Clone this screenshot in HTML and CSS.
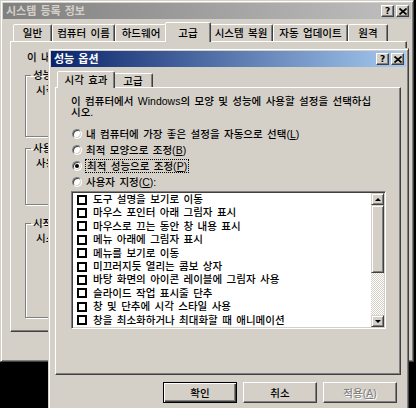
FILE: index.html
```html
<!DOCTYPE html>
<html lang="ko">
<head>
  <meta charset="UTF-8" />
  <title>성능 옵션</title>
  <link rel="stylesheet" href="styles.css">
</head>
<body>
  <div class="desktop">

    <!-- back window -->
    <div class="window sysprops">
      <div class="titlebar inactive">
        <span class="title">시스템 등록 정보</span>
        <span class="caption-btns">
          <span class="cbtn">?</span>
          <span class="cbtn"><svg width="8" height="7" viewBox="0 0 8 7"><path d="M0.5 0.5 L7.5 6.5 M7.5 0.5 L0.5 6.5" stroke="#000" stroke-width="1.7"/></svg></span>
        </span>
      </div>
      <div class="win-body">
        <div class="tabs">
          <span class="tab t-general">일반</span>
          <span class="tab t-name">컴퓨터 이름</span>
          <span class="tab t-hw">하드웨어</span>
          <span class="tab t-adv selected">고급</span>
          <span class="tab t-restore">시스템 복원</span>
          <span class="tab t-update">자동 업데이트</span>
          <span class="tab t-remote">원격</span>
        </div>
        <div class="panel sys-panel">
          <p class="note">이 내용을 변경하려면 관리자로 로그온해야 합니다.</p>
          <fieldset class="group g-perf">
            <legend>성능</legend>
            <p>시각 효과, 프로세서 일정, 메모리 사용 및 가상 메모리</p>
          </fieldset>
          <fieldset class="group g-profile">
            <legend>사용자 프로필</legend>
            <p>사용자 로그온에 관련된 바탕 화면 설정</p>
          </fieldset>
          <fieldset class="group g-startup">
            <legend>시작 및 복구</legend>
            <p>시스템 시작, 시스템 오류 및 디버깅 정보</p>
          </fieldset>
        </div>
      </div>
    </div>

    <!-- front dialog -->
    <div class="window perf">
      <div class="titlebar active">
        <span class="title">성능 옵션</span>
        <span class="caption-btns">
          <span class="cbtn">?</span>
          <span class="cbtn"><svg width="8" height="7" viewBox="0 0 8 7"><path d="M0.5 0.5 L7.5 6.5 M7.5 0.5 L0.5 6.5" stroke="#000" stroke-width="1.7"/></svg></span>
        </span>
      </div>
      <div class="win-body">
        <div class="tabs small">
          <span class="tab t-visual selected">시각 효과</span>
          <span class="tab t-adv2">고급</span>
        </div>
        <div class="panel perf-panel">
          <p class="intro">이 컴퓨터에서 Windows의 모양 및 성능에 사용할 설정을 선택하십<br>시오.</p>

          <div class="radios">
            <div class="radio"><span class="dot"></span><span>내 컴퓨터에 가장 좋은 설정을 자동으로 선택(<u>L</u>)</span></div>
            <div class="radio"><span class="dot"></span><span>최적 모양으로 조정(<u>B</u>)</span></div>
            <div class="radio checked"><span class="dot"></span><span class="focus">최적 성능으로 조정(<u>P</u>)</span></div>
            <div class="radio"><span class="dot"></span><span>사용자 지정(<u>C</u>):</span></div>
          </div>

          <div class="listbox">
            <ul class="checklist">
              <li><span class="check"></span>도구 설명을 보기로 이동</li>
              <li><span class="check"></span>마우스 포인터 아래 그림자 표시</li>
              <li><span class="check"></span>마우스로 끄는 동안 창 내용 표시</li>
              <li><span class="check"></span>메뉴 아래에 그림자 표시</li>
              <li><span class="check"></span>메뉴를 보기로 이동</li>
              <li><span class="check"></span>미끄러지듯 열리는 콤보 상자</li>
              <li><span class="check"></span>바탕 화면의 아이콘 레이블에 그림자 사용</li>
              <li><span class="check"></span>슬라이드 작업 표시줄 단추</li>
              <li><span class="check"></span>창 및 단추에 시각 스타일 사용</li>
              <li><span class="check"></span>창을 최소화하거나 최대화할 때 애니메이션</li>
            </ul>
            <div class="scrollbar">
              <span class="sb-btn"><span class="arrow-up"></span></span>
              <span class="sb-thumb"></span>
              <span class="sb-track"></span>
              <span class="sb-btn"><span class="arrow-down"></span></span>
            </div>
          </div>
        </div>

        <div class="buttons">
          <span class="btn default">확인</span>
          <span class="btn">취소</span>
          <span class="btn disabled"><span>적용(<u>A</u>)</span></span>
        </div>
      </div>
    </div>

  </div>
</body>
</html>
```

FILE: styles.css
```css
* {
  box-sizing: border-box;
}
body {
  margin: 0;
  width: 416px;
  height: 408px;
  overflow: hidden;
  background: #000;
  color: #000;
  font-family: "Liberation Sans", "Noto Sans CJK KR", sans-serif;
  font-size: 10.5px;
  font-weight: 500;
  line-height: 12px;
  word-spacing: 1.5px;
}
p {
  margin: 0;
}
.desktop {
  position: relative;
  width: 416px;
  height: 408px;
}

/* windows */
.window {
  position: absolute;
  display: flex;
  flex-direction: column;
  padding: 2px;
  background: #d4d0c8;
  border: 1px solid;
  border-color: #d4d0c8 #404040 #404040 #d4d0c8;
  box-shadow: inset 1px 1px #fff, inset -1px -1px #808080;
}
.sysprops {
  left: 0;
  top: 0;
  width: 414px;
  height: 362px;
}
.perf {
  left: 48px;
  top: 48px;
  width: 361px;
  height: 372px;
}
.titlebar {
  height: 16px;
  flex: none;
  display: flex;
  align-items: center;
  justify-content: space-between;
  padding: 0 2px 0 3px;
  font-size: 11px;
  font-weight: bold;
  word-spacing: 1px;
}
.titlebar.inactive {
  background: linear-gradient(to right, #808080, #c0c0c0);
  color: #d4d0c8;
}
.titlebar.active {
  background: linear-gradient(to right, #0a246a, #a6caf0);
  color: #fff;
}
.caption-btns {
  display: flex;
  gap: 2px;
}
.cbtn {
  width: 13px;
  height: 12px;
  display: flex;
  align-items: center;
  justify-content: center;
  background: #d4d0c8;
  border: 1px solid;
  border-color: #fff #404040 #404040 #fff;
  box-shadow: inset -1px -1px #808080;
  color: #000;
  font-family: "DejaVu Sans", sans-serif;
  font-size: 9px;
  font-weight: bold;
}

/* tabs */
.sysprops .win-body {
  padding: 3px 4px 0 7px;
}
.perf .win-body {
  padding: 4px 5px 0 4px;
}
.tabs {
  display: flex;
  align-items: flex-end;
  height: 19px;
  padding-left: 3px;
  position: relative;
  z-index: 1;
}
.tabs.small {
  height: 16px;
  padding-left: 4px;
}
.tab {
  height: 17px;
  display: flex;
  align-items: center;
  justify-content: center;
  border: 1px solid;
  border-bottom: 0;
  border-color: #fff #404040 transparent #fff;
  border-radius: 2px 2px 0 0;
  box-shadow: inset -1px 0 #808080;
  background: #d4d0c8;
  white-space: nowrap;
}
.tabs.small .tab {
  height: 14px;
}
.tab.selected {
  height: 20px;
  margin: 0 -2px -1px;
  position: relative;
  z-index: 2;
}
.tabs.small .tab.selected {
  height: 17px;
}
.t-general { width: 39px; }
.t-name { width: 63px; }
.t-hw { width: 52px; }
.t-adv { width: 46px; }
.t-restore { width: 64px; }
.t-update { width: 75px; }
.t-remote { width: 40px; }
.t-visual { width: 58px; }
.t-adv2 { width: 40px; }

.panel {
  border: 1px solid;
  border-color: #fff #404040 #404040 #fff;
  box-shadow: inset -1px -1px #808080;
}

/* back window panel */
.sys-panel {
  width: 397px;
  height: 291px;
  padding: 9px 0 0 14px;
}
.note {
  margin-left: 2px;
}
.group {
  width: 367px;
  margin: 0;
  padding: 3px 8px 0 10px;
  border: 1px solid #808080;
  box-shadow: 1px 1px #fff, inset 1px 1px #fff;
}
.group legend {
  padding: 0 2px;
  margin-left: -5px;
}
.g-perf {
  height: 68px;
  margin-top: 6px;
}
.g-profile {
  height: 63px;
  margin-top: 5px;
}
.g-startup {
  height: 101px;
  margin-top: 12px;
}

/* front dialog panel */
.perf-panel {
  width: 346px;
  height: 288px;
  padding: 8px 14px 0 15px;
}
.intro {
  line-height: 11px;
  white-space: nowrap;
}
.radios {
  margin-top: 8px;
}
.radio {
  height: 16px;
  display: flex;
  align-items: center;
  gap: 4px;
  padding-left: 1px;
  white-space: nowrap;
}
.dot {
  width: 10px;
  height: 10px;
  flex: none;
  position: relative;
  border-radius: 50%;
  background: #fff;
  border: 1px solid;
  border-color: #808080 #fff #fff #808080;
  box-shadow: inset 1px 1px #404040, inset -1px -1px #d4d0c8;
}
.radio.checked .dot::after {
  content: "";
  position: absolute;
  left: 2px;
  top: 2px;
  width: 4px;
  height: 4px;
  border-radius: 50%;
  background: #000;
}
.focus {
  outline: 1px dotted #000;
  padding: 0 1px;
}

.listbox {
  margin-top: 1px;
  width: 315px;
  height: 138px;
  display: flex;
  background: #fff;
  border: 1px solid;
  border-color: #808080 #fff #fff #808080;
  box-shadow: inset 1px 1px #404040, inset -1px -1px #d4d0c8;
  padding: 1px;
}
.checklist {
  list-style: none;
  margin: 0;
  padding: 0 0 0 4px;
  flex: 1;
}
.checklist li {
  height: 13.4px;
  line-height: 13.4px;
  display: flex;
  align-items: center;
  gap: 6px;
  white-space: nowrap;
}
.check {
  width: 10px;
  height: 10px;
  flex: none;
  border: 2px solid #000;
  background: #fff;
}

.scrollbar {
  width: 13px;
  display: flex;
  flex-direction: column;
  background: conic-gradient(#fff 0 25%, #d4d0c8 0 50%, #fff 0 75%, #d4d0c8 0) 0 0 / 2px 2px;
}
.sb-btn,
.sb-thumb {
  background: #d4d0c8;
  border: 1px solid;
  border-color: #d4d0c8 #404040 #404040 #d4d0c8;
  box-shadow: inset 1px 1px #fff, inset -1px -1px #808080;
}
.sb-btn {
  height: 12px;
  display: flex;
  align-items: center;
  justify-content: center;
}
.sb-thumb {
  height: 68px;
}
.sb-track {
  flex: 1;
}
.arrow-up,
.arrow-down {
  width: 0;
  height: 0;
  border-left: 3px solid transparent;
  border-right: 3px solid transparent;
}
.arrow-up {
  border-bottom: 3px solid #000;
}
.arrow-down {
  border-top: 3px solid #000;
}

/* dialog buttons */
.buttons {
  display: flex;
  justify-content: flex-end;
  gap: 6px;
  margin-top: 7px;
  padding-right: 4px;
}
.btn {
  width: 74px;
  height: 21px;
  display: flex;
  align-items: center;
  justify-content: center;
  background: #d4d0c8;
  border: 1px solid;
  border-color: #fff #404040 #404040 #fff;
  box-shadow: inset -1px -1px #808080;
}
.btn.default {
  border-color: #000;
  box-shadow: inset 1px 1px #fff, inset -1px -1px #404040, inset -2px -2px #808080;
}
.btn.disabled {
  color: #808080;
  text-shadow: 1px 1px #fff;
}
```
